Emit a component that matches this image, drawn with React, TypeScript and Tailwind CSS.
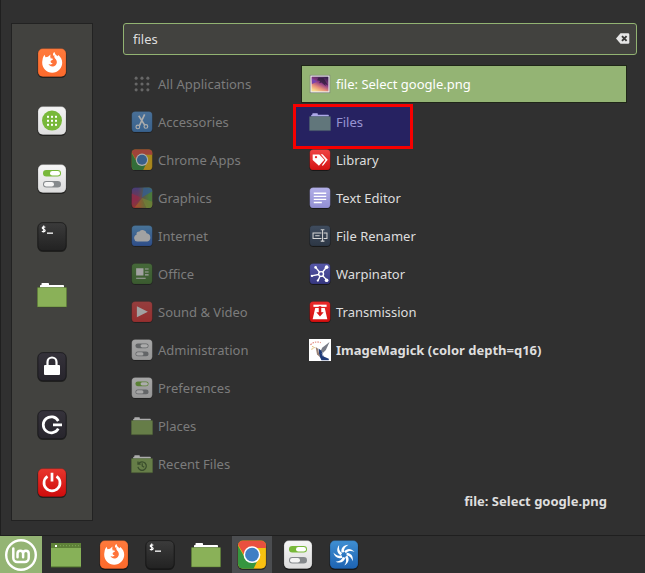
import React, { useId, useState } from 'react';

type IconProps = { className?: string };

// Rounded square that most of the launcher icons sit on
const Tile = ({ from, to, edge = '#00000040', className, children }: IconProps & { from: string; to: string; edge?: string; children?: React.ReactNode }) => {
    const id = useId();
    return (
        <svg viewBox="0 0 30 30" className={className} aria-hidden="true">
            <defs>
                <linearGradient id={id} x1="0" y1="0" x2="0" y2="1">
                    <stop offset="0" stopColor={from} />
                    <stop offset="1" stopColor={to} />
                </linearGradient>
            </defs>
            <rect x="0.5" y="1.2" width="29" height="28.8" rx="5.5" fill="#000" opacity="0.45" />
            <rect x="0.9" y="0.6" width="28.2" height="28.2" rx="5" fill={`url(#${id})`} stroke={edge} strokeWidth="0.7" />
            {children}
        </svg>
    );
};

const FirefoxIcon = ({ className }: IconProps) => (
    <Tile from="#ff7a3c" to="#fd6a2c" className={className}>
        <path
            fill="#fff"
            d="M5.500 12C5.700 10 6.300 8.500 7.500 6.800l1 2.400 2.500-.5 2.500-2.300-.3 3 2.300.8 1-2.200C15.500 6 16 5 17.500 4c.3 2 1.500 3 3 4.200l.8-1.200c2.600 2 3.900 4.700 3.900 7.800 0 5.500-4.400 9.900-10 9.900s-10-4.400-10-9.900c0-1 .1-1.900.3-2.800z"
        />
        <path
            fill="#ff733a"
            d="M12.800 10l3.200.8c.3 1.200-1.700 1.700-2.300 2.100-.3 1.300.5 2.300 2 2.300-1 1.300-3 1.600-4.200.8.8 2 3.300 3 5.500 2.200 3-1.100 3.700-4.500 1.800-6.900-1-1.200-2-2.300-1.400-4.300l-1.600 1.300-.8 1.700z"
        />
    </Tile>
);

const GridIcon = ({ className }: IconProps) => (
    <Tile from="#f4f4f4" to="#dedede" className={className}>
        <circle cx="15" cy="14.600" r="10" fill="#78b83a" />
        {[10, 14, 18].map((y) => [10, 14, 18].map((x) => <rect key={`${x}-${y}`} x={x} y={y - 0.200} width="2" height="2" fill="#fff" />))}
    </Tile>
);

const TogglesIcon = ({ className, on = '#78b83a' }: IconProps & { on?: string }) => (
    <Tile from="#f6f6f6" to="#dcdcdc" className={className}>
        <rect x="6" y="6" width="18" height="6.600" rx="3.300" fill={on} />
        <rect x="13" y="7" width="10" height="4.600" rx="2.300" fill="#fff" />
        <rect x="6" y="17" width="18" height="6.600" rx="3.300" fill="#85898c" />
        <rect x="7" y="18" width="10" height="4.600" rx="2.300" fill="#f4f4f4" />
    </Tile>
);

const TerminalIcon = ({ className }: IconProps) => (
    <Tile from="#3b3b3b" to="#222222" edge="#151515" className={className}>
        <path d="M8.300 5.400C7.500 4.500 5.200 4.600 5.200 6c0 1.500 3 1 3 2.600 0 1.400-2.400 1.500-3.300.5M6.700 3.600v7" fill="none" stroke="#fff" strokeWidth="1.100" />
        <rect x="10" y="10.500" width="6" height="1.300" fill="#fff" />
    </Tile>
);

const FolderIcon = ({ className, children }: IconProps & { children?: React.ReactNode }) => (
    <svg viewBox="0 0 30 30" className={className} aria-hidden="true">
        <path d="M3 9V5.300L4.500 5V3.600Q4.500 3 5.200 3h6Q12 3 12 3.700V5h14.200q.8 0 .8.800V9z" fill="#fff" />
        <rect x="0.500" y="7.500" width="29" height="19.500" rx="0.600" fill="#8ab158" stroke="#5f7f38" strokeWidth="0.700" />
        <rect x="1" y="27" width="28" height="0.800" fill="#2b2b2b" opacity="0.500" />
        {children}
    </svg>
);

const RecentIcon = ({ className }: IconProps) => (
    <FolderIcon className={className}>
        <path d="M10.300 14.500a5.800 5.800 0 1 1-.9 4.500M9.500 11.500v3.700h3.700M15.300 14v3.700l2.700 1.800" fill="none" stroke="#40602a" strokeWidth="1.700" />
    </FolderIcon>
);

const LockIcon = ({ className }: IconProps) => (
    <Tile from="#35323b" to="#27252c" edge="#151518" className={className}>
        <path d="M10.500 14V10a4.500 4.500 0 0 1 9 0v4" fill="none" stroke="#fff" strokeWidth="2.200" />
        <rect x="7" y="13" width="16" height="10" rx="1" fill="#fff" />
    </Tile>
);

const LogoutIcon = ({ className }: IconProps) => (
    <Tile from="#35323b" to="#27252c" edge="#151518" className={className}>
        <path d="M21.300 11A8 8 0 1 0 21.300 18.600M16 14.800h9" fill="none" stroke="#fff" strokeWidth="2.700" />
    </Tile>
);

const PowerIcon = ({ className }: IconProps) => (
    <Tile from="#e8362d" to="#cf0c0c" className={className}>
        <path d="M10.500 8.300a8 8 0 1 0 9 0M15 4.800v8.700" fill="none" stroke="#fff" strokeWidth="2.700" />
    </Tile>
);

const DotsIcon = ({ className }: IconProps) => (
    <svg viewBox="0 0 30 30" className={className} fill="#8d8d8d" aria-hidden="true">
        {[7, 15, 23].map((y) => [7, 15, 23].map((x) => <circle key={`${x}-${y}`} cx={x} cy={y} r="2.100" />))}
    </svg>
);

const ScissorsIcon = ({ className }: IconProps) => (
    <Tile from="#5b9bdc" to="#3f83cb" className={className}>
        <g fill="none" stroke="#fff" strokeWidth="1.600">
            <path d="M18.600 4.500 11.500 20M10.500 6.500l8 12.500" strokeWidth="2.200" />
            <circle cx="9.300" cy="21.700" r="2.500" />
            <circle cx="20.300" cy="21" r="2.500" />
        </g>
    </Tile>
);

const ChromeIcon = ({ className }: IconProps) => {
    const id = useId();
    return (
        <Tile from="#f1c40f" to="#fbbf12" className={className}>
            <clipPath id={id}>
                <rect x="1" y="0.700" width="28" height="28" rx="5" />
            </clipPath>
            <g clipPath={`url(#${id})`}>
                <path d="M0 0h30v8H15L9 18 0 3z" fill="#e9503f" />
                <path d="M0 4l8.500 14.500L20 21.500 16 30H0z" fill="#36963f" />
            </g>
            <circle cx="15" cy="14.700" r="8.400" fill="#fff" />
            <circle cx="15" cy="14.700" r="6.900" fill="#3f7fc4" />
        </Tile>
    );
};

const GraphicsIcon = ({ className }: IconProps) => {
    const id = useId();
    return (
        <Tile from="#5647a8" to="#dc3434" className={className}>
            <defs>
                <linearGradient id={id} x1="0" x2="1">
                    <stop offset="0.300" stopColor="#5cab45" stopOpacity="0" />
                    <stop offset="0.850" stopColor="#5cab45" />
                </linearGradient>
            </defs>
            <path d="M15 15 1 9v15z" fill="#d02858" opacity="0.800" />
            <path d="M15 15 24 28H5z" fill="#e6782a" opacity="0.850" />
            <rect x="1" y="0.700" width="28" height="28" rx="5" fill={`url(#${id})`} />
            <path d="M15 14 17 1h7q5 0 5 5z" fill="#3d79c8" opacity="0.850" />
            <path d="M15 15 29 20v4q0 4.500-5 4.500h-3z" fill="#a6b83a" opacity="0.700" />
        </Tile>
    );
};

const CloudIcon = ({ className }: IconProps) => (
    <Tile from="#5aa2dd" to="#2d61c4" className={className}>
        <path d="M8.500 22.500a4.800 4.800 0 0 1-1-9.300 4 4 0 0 1 4-4.400 5.700 5.700 0 0 1 9.800 2.600 5.700 5.700 0 0 1 1 11.100z" fill="#eee" />
    </Tile>
);

const OfficeIcon = ({ className }: IconProps) => (
    <Tile from="#558f40" to="#427730" className={className}>
        <path d="M7 7h10v10H7zM19 7.500h5V9h-5zM19 11.500h5V13h-5zM19 15.500h5V17h-5zM7 20h13v1.600H7z" fill="#eee" />
    </Tile>
);

const PlayIcon = ({ className }: IconProps) => (
    <Tile from="#d84747" to="#d92f2f" className={className}>
        <path d="M8 7v15l15-7.500z" fill="#eee" />
    </Tile>
);

const PictureIcon = ({ className }: IconProps) => {
    const id = useId();
    return (
        <svg viewBox="0 0 30 30" className={className} aria-hidden="true">
            <defs>
                <linearGradient id={id} x1="0.800" y1="0" x2="0.300" y2="1">
                    <stop offset="0" stopColor="#34204c" />
                    <stop offset="0.450" stopColor="#8d3c86" />
                    <stop offset="0.750" stopColor="#e8907a" />
                    <stop offset="1" stopColor="#f8d98c" />
                </linearGradient>
            </defs>
            <rect x="1.500" y="3" width="27" height="24" fill="#eee" stroke="#777" strokeWidth="0.800" />
            <rect x="3.500" y="5" width="23" height="20" fill={`url(#${id})`} />
            <path d="m13 6 7 1 6 10-4-2 1 3-6-5-3 1 1-3-4-1z" fill="#281c38" opacity="0.700" />
            <path d="m4 7 7 5-7 3z" fill="#7744b0" />
        </svg>
    );
};

const LibraryIcon = ({ className }: IconProps) => (
    <Tile from="#ef4545" to="#d41212" className={className}>
        <path d="M16 7h2.500l7 7.500-6.500 8.500-1.500-1 5-7z" fill="#fff" />
        <path fillRule="evenodd" d="M5 7.500h9l7 7-7.500 8.500L5 15zM9.500 9.500a1.600 1.600 0 1 0 .1 3.200 1.600 1.600 0 0 0-.1-3.200z" fill="#fff" />
    </Tile>
);

const TextEditorIcon = ({ className }: IconProps) => (
    <Tile from="#b3b0e8" to="#918ed2" className={className}>
        <path d="M6.500 8.500h17M6.500 12.700h17M6.500 16.900h17M6.500 21.100h11" stroke="#fff" strokeWidth="1.800" />
    </Tile>
);

const RenamerIcon = ({ className }: IconProps) => (
    <Tile from="#3f4c5e" to="#2d3745" className={className}>
        <path d="M17 11H5.500v7.500H17M20 11h4.500v7.500H20M18.500 7v15M16 6.500h5M16 22h5M8.500 14.700h6" fill="none" stroke="#d5d5d5" strokeWidth="1.400" />
    </Tile>
);

const WarpinatorIcon = ({ className }: IconProps) => (
    <Tile from="#5657a8" to="#36377f" className={className}>
        <g stroke="#fff" strokeWidth="1.900">
            <path d="M16.500 15 9 6M16.500 15 24 5.500M16.500 15 3.500 17.500M16.500 15l7.500 8M16.500 15 12 24.500" />
            <circle cx="16.500" cy="15" r="3.300" fill="#4a4b9c" />
        </g>
        <g fill="#fff">
            <circle cx="9" cy="6" r="1.800" />
            <circle cx="24" cy="5.700" r="2.500" />
            <circle cx="4" cy="17.500" r="1.600" />
            <circle cx="24" cy="23.500" r="2.500" />
            <circle cx="12" cy="24" r="1.500" />
        </g>
    </Tile>
);

const TransmissionIcon = ({ className }: IconProps) => (
    <Tile from="#ea2a2a" to="#d30f0f" className={className}>
        <path d="M6 5h18v3H6z" fill="#fff" />
        <path d="M8.500 9.500h13l3.500 15.500H5z" fill="#fff" />
        <path d="M13.300 7h3.400v8.500h3.300l-5 5.500-5-5.500h3.300z" fill="#d91717" />
    </Tile>
);

const ImageMagickIcon = ({ className }: IconProps) => (
    <svg viewBox="0 0 30 30" className={className} aria-hidden="true">
        <rect width="30" height="30" fill="#fff" />
        <path d="M2 8q6-6 14-3" fill="none" stroke="#df8377" strokeWidth="1.500" strokeDasharray="2 1.500" />
        <path d="M28 4 18 12l-2 4 3 3 4-4z" fill="#777b86" />
        <path d="m13 13 4 3 3 8 7 3v2H17l-3-6z" fill="#1f3b78" />
        <path d="m9 11 3 2 3 12-4-4z" fill="#9a8174" />
        <path d="m4 10 4 2M3 14l3-1" stroke="#d6a64a" strokeWidth="1" />
        <path d="m17 19 3 3-1 2z" fill="#d7dbe8" />
    </svg>
);

const WindowIcon = ({ className }: IconProps) => (
    <svg viewBox="0 0 30 30" className={className} aria-hidden="true">
        <rect y="3" width="30" height="24" fill="#87b158" />
        <rect y="3" width="30" height="5" fill="#5e8138" />
        <rect x="4" y="5" width="2" height="2" fill="#fff" />
        <path d="M9 5.700h19" stroke="#83a95a" strokeDasharray="1 2" />
        <path d="M0 27h30" stroke="#4a6a2a" />
    </svg>
);

const ShutterIcon = ({ className }: IconProps) => (
    <Tile from="#3f8fd2" to="#1d63b2" className={className}>
        <g fill="#fff">
            {[0, 51, 103, 154, 206, 257, 309].map((angle) => (
                <path key={angle} transform={`rotate(${angle} 15 14.700)`} d="M12.500 12.500C11.800 8.500 14 5 19.500 4.800 16.500 6.500 14.600 8.800 15 12.200z" />
            ))}
        </g>
    </Tile>
);

const MintLogo = ({ className }: IconProps) => (
    <svg viewBox="0 0 34 34" className={className} fill="none" stroke="#fff" strokeLinecap="round" aria-hidden="true">
        <circle cx="17" cy="17" r="14.800" strokeWidth="2.400" />
        <path d="M9.300 10.500v9.500a4 4 0 0 0 4 4h7.400a4 4 0 0 0 4-4v-4.500a2.800 2.800 0 0 0-5.600 0v3.800M19.100 15.500a2.800 2.800 0 0 0-5.600 0v3.800" strokeWidth="2.500" />
    </svg>
);

type Entry = { name: string; Icon: (props: IconProps) => React.JSX.Element };

const favorites: Entry[] = [
    { name: 'Firefox', Icon: FirefoxIcon },
    { name: 'Software Manager', Icon: GridIcon },
    { name: 'System Settings', Icon: TogglesIcon },
    { name: 'Terminal', Icon: TerminalIcon },
    { name: 'Home', Icon: FolderIcon },
];

const session: Entry[] = [
    { name: 'Lock Screen', Icon: LockIcon },
    { name: 'Logout', Icon: LogoutIcon },
    { name: 'Quit', Icon: PowerIcon },
];

const categories: Entry[] = [
    { name: 'All Applications', Icon: DotsIcon },
    { name: 'Accessories', Icon: ScissorsIcon },
    { name: 'Chrome Apps', Icon: ChromeIcon },
    { name: 'Graphics', Icon: GraphicsIcon },
    { name: 'Internet', Icon: CloudIcon },
    { name: 'Office', Icon: OfficeIcon },
    { name: 'Sound & Video', Icon: PlayIcon },
    { name: 'Administration', Icon: (props) => <TogglesIcon on="#85898c" {...props} /> },
    { name: 'Preferences', Icon: TogglesIcon },
    { name: 'Places', Icon: FolderIcon },
    { name: 'Recent Files', Icon: RecentIcon },
];

const results: Entry[] = [
    { name: 'file: Select google.png', Icon: PictureIcon },
    { name: 'Files', Icon: FolderIcon },
    { name: 'Library', Icon: LibraryIcon },
    { name: 'Text Editor', Icon: TextEditorIcon },
    { name: 'File Renamer', Icon: RenamerIcon },
    { name: 'Warpinator', Icon: WarpinatorIcon },
    { name: 'Transmission', Icon: TransmissionIcon },
    { name: 'ImageMagick (color depth=q16)', Icon: ImageMagickIcon },
];

const windows: Entry[] = [
    { name: 'Firefox', Icon: FirefoxIcon },
    { name: 'Terminal', Icon: TerminalIcon },
    { name: 'Files', Icon: FolderIcon },
    { name: 'Google Chrome', Icon: ChromeIcon },
    { name: 'System Settings', Icon: TogglesIcon },
    { name: 'Shutter', Icon: ShutterIcon },
];

const SideButton = ({ name, Icon }: Entry) => (
    <button type="button" aria-label={name} className="block">
        <Icon className="block size-[30px]" />
    </button>
);

const App = () => {
    const [query, setQuery] = useState('files');
    const [selected, setSelected] = useState(0);

    return (
        <div className="flex min-h-screen flex-col bg-[#303030] font-['Noto_Sans',sans-serif] text-[13px] leading-5 text-[#dedede]">
            <main className="flex flex-1 border-b border-l border-[#1f1f1f] pt-[23px] pr-2 pb-3.5 pl-2.5">
                {/* Favorites */}
                <nav aria-label="Favorites" className="flex w-[82px] shrink-0 flex-col items-center justify-between border border-[#222222] bg-[#42423f] pt-6 pb-[22px]">
                    <div className="flex flex-col gap-7">
                        {favorites.map((item) => <SideButton key={item.name} {...item} />)}
                    </div>
                    <div className="flex flex-col gap-7">
                        {session.map((item) => <SideButton key={item.name} {...item} />)}
                    </div>
                </nav>

                <div className="ml-[30px] flex flex-1 flex-col">
                    {/* Search */}
                    <div className="relative">
                        <input
                            type="text"
                            aria-label="Search"
                            value={query}
                            onChange={(e) => setQuery(e.target.value)}
                            className="block h-8 w-full rounded-[3px] border border-[#92b372] bg-[#42423f] pr-8 pl-[9px] outline-none"
                        />
                        <button type="button" aria-label="Clear search" onClick={() => setQuery('')} className="absolute top-2 right-1.5">
                            <svg viewBox="0 0 16 16" className="block size-4" aria-hidden="true">
                                <path d="M5.500 2.300H13q1.300 0 1.300 1.300v7.800q0 1.300-1.300 1.300H5.500L1 7.500z" fill="#e6e6e6" />
                                <path d="m7 5.200 4.600 4.600m0-4.600L7 9.800" stroke="#3a3a38" strokeWidth="1.900" />
                            </svg>
                        </button>
                    </div>

                    <div className="mt-2.5 flex">
                        <ul className="w-[178px] shrink-0">
                            {categories.map(({ name, Icon }) => (
                                <li key={name}>
                                    <button type="button" className="flex h-[38px] w-full items-center gap-[5px] px-2 text-left text-[#7c7c7c]">
                                        <Icon className="size-[22px] opacity-60" />
                                        {name}
                                    </button>
                                </li>
                            ))}
                        </ul>

                        <ul className="mr-2.5 flex-1">
                            {results.map(({ name, Icon }, i) => (
                                <li key={name} className="relative">
                                    <button
                                        type="button"
                                        onClick={() => setSelected(i)}
                                        className={`flex h-[38px] w-full items-center gap-[5px] border px-[7px] text-left ${i === selected ? 'border-[#1f2618] bg-[#94b474] text-white' : 'border-transparent'} ${i === 7 ? 'font-bold' : ''}`}
                                    >
                                        <Icon className="size-[22px]" />
                                        {name}
                                    </button>
                                    {/* Marker around the Files entry */}
                                    {name === 'Files' && (
                                        <span className="pointer-events-none absolute top-px -left-2 h-[45px] w-[120px] border-3 border-[#f60000] bg-[#140abe]/35" />
                                    )}
                                </li>
                            ))}
                        </ul>
                    </div>

                    <p className="mt-auto mr-[30px] mb-2.5 text-right font-bold">{results[selected].name}</p>
                </div>
            </main>

            {/* Panel */}
            <footer className="flex h-[37px] items-stretch bg-[#2f2f2f]">
                <button type="button" aria-label="Menu" className="flex w-[42px] items-center justify-center bg-[#94b474]">
                    <MintLogo className="size-[34px]" />
                </button>
                <button type="button" aria-label="Show Desktop" className="mr-2 ml-1 flex w-10 items-center justify-center">
                    <WindowIcon className="size-[30px]" />
                </button>
                <div className="flex gap-1.5">
                    {windows.map(({ name, Icon }) => (
                        <button key={name} type="button" aria-label={name} className={`flex w-10 items-center justify-center ${name === 'Google Chrome' ? 'bg-[#4b4d50]' : ''}`}>
                            <Icon className="size-[30px]" />
                        </button>
                    ))}
                </div>
            </footer>
        </div>
    );
};

export default App;
